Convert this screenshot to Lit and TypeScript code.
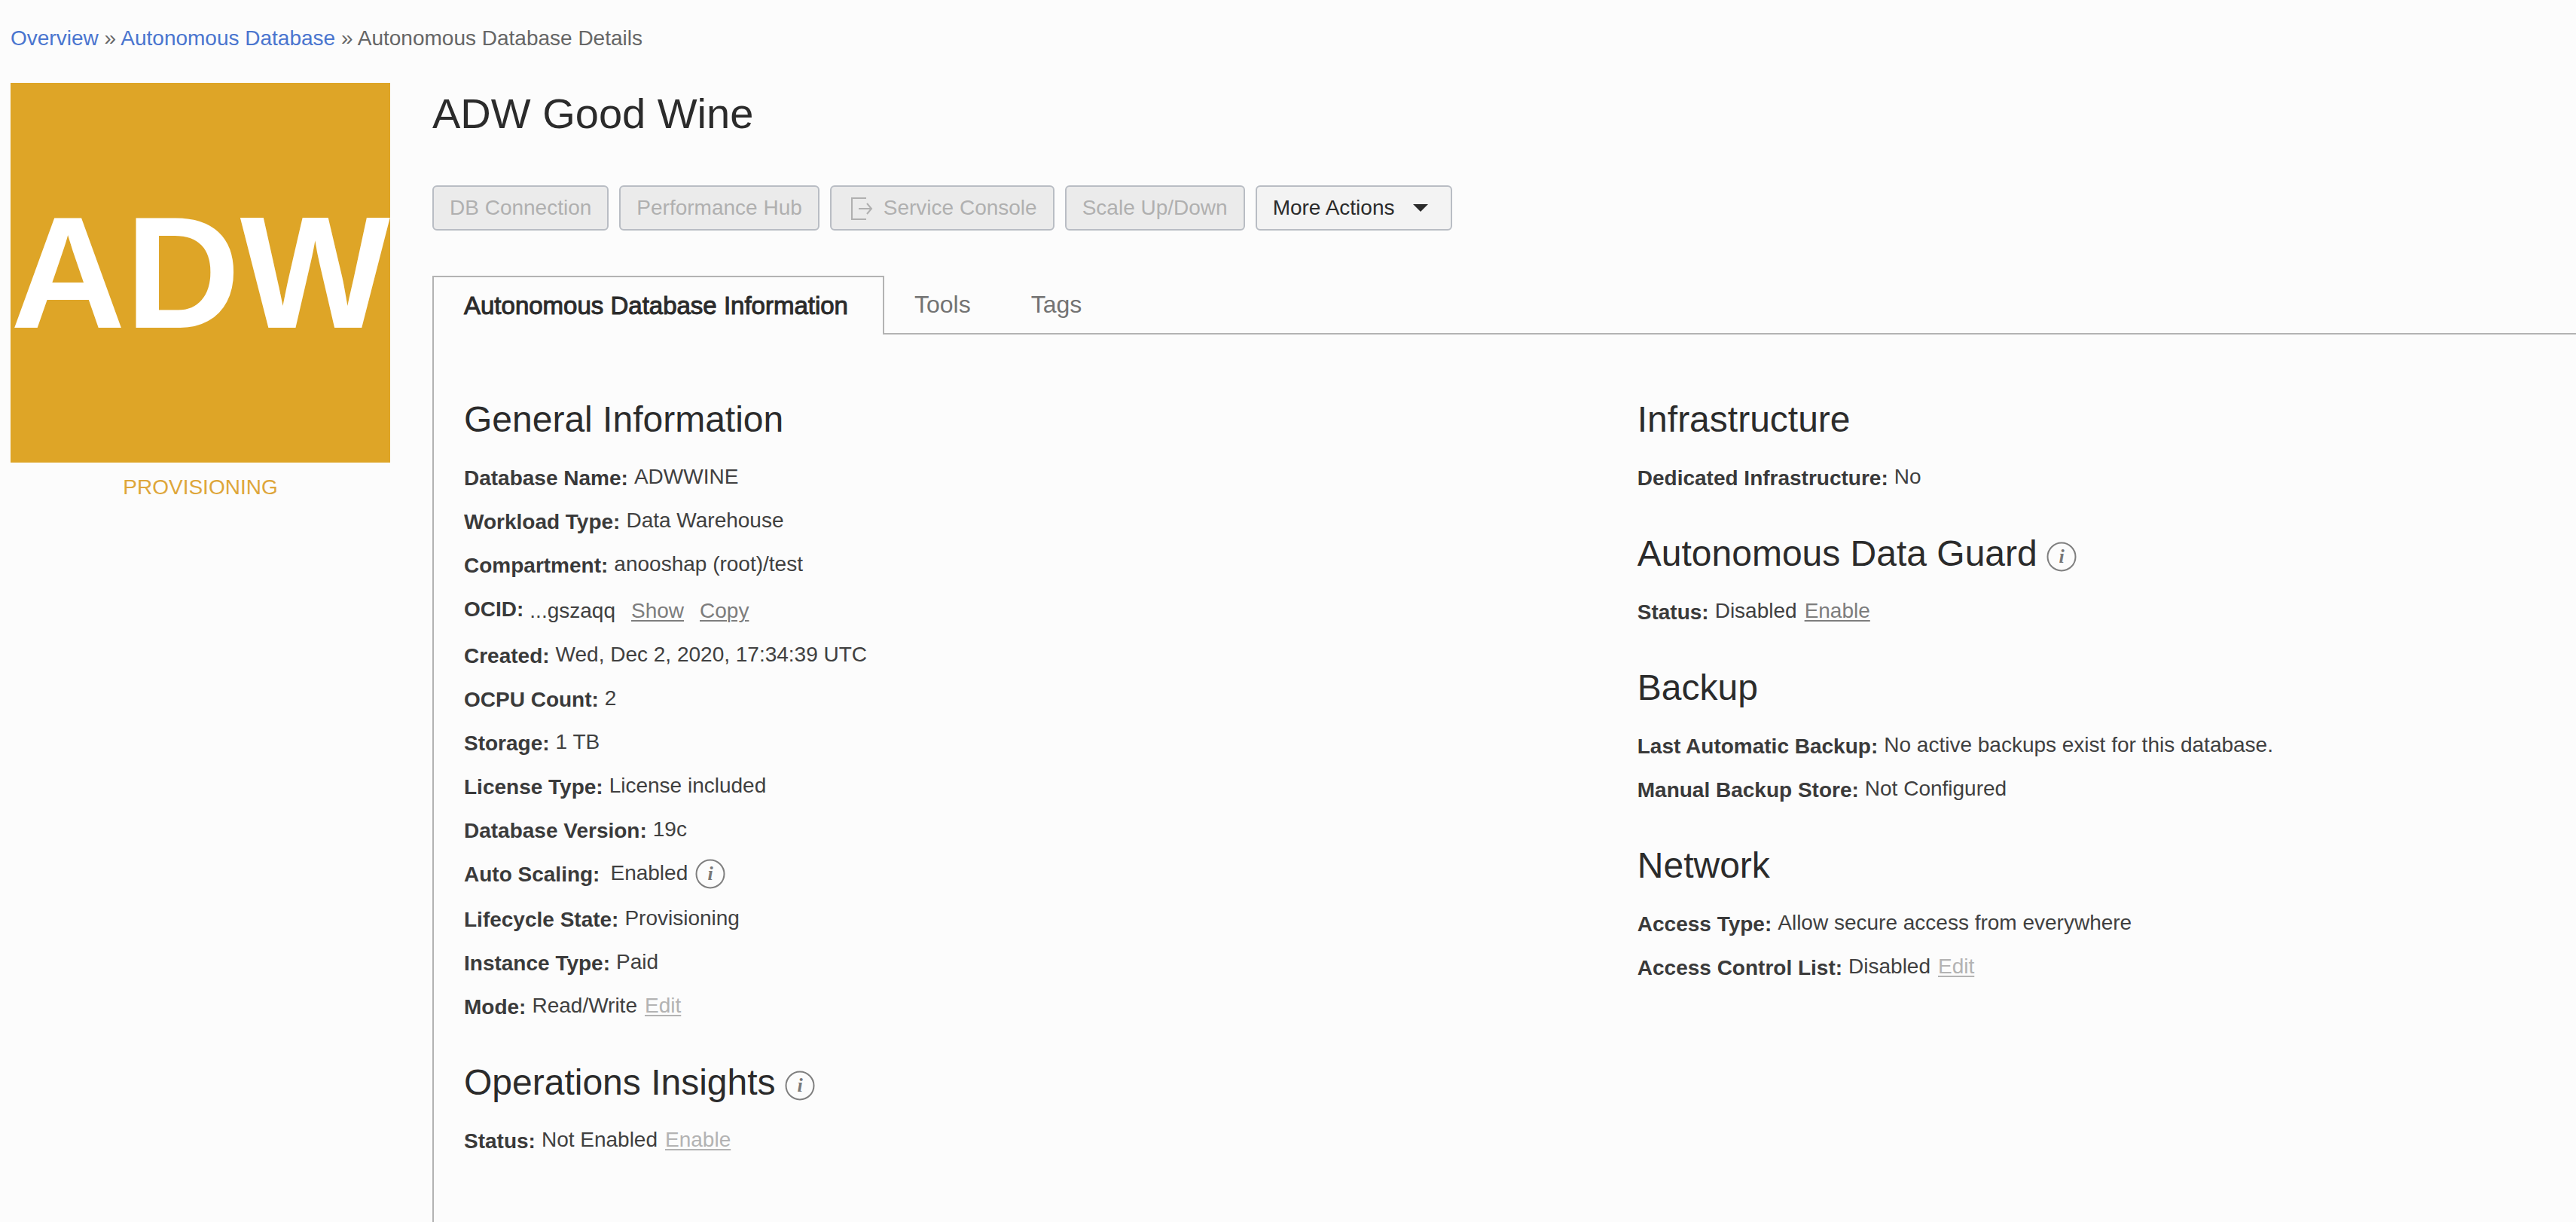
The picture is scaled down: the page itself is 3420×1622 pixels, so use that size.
import { LitElement, html, css, svg, nothing, type TemplateResult } from "lit";
import { customElement, property } from "lit/decorators.js";
import { classMap } from "lit/directives/class-map.js";

interface Action {
  text: string;
  disabled?: boolean;
}

interface Field {
  label: string;
  value: string;
  actions?: Action[];
  kind?: "identifier" | "hinted";
}

interface Section {
  title: string;
  hint?: boolean;
  fields: Field[];
}

const LEFT: Section[] = [
  {
    title: "General Information",
    fields: [
      { label: "Database Name:", value: "ADWWINE" },
      { label: "Workload Type:", value: "Data Warehouse" },
      { label: "Compartment:", value: "anooshap (root)/test" },
      {
        label: "OCID:",
        value: "...gszaqq",
        kind: "identifier",
        actions: [{ text: "Show" }, { text: "Copy" }],
      },
      { label: "Created:", value: "Wed, Dec 2, 2020, 17:34:39 UTC" },
      { label: "OCPU Count:", value: "2" },
      { label: "Storage:", value: "1 TB" },
      { label: "License Type:", value: "License included" },
      { label: "Database Version:", value: "19c" },
      { label: "Auto Scaling:", value: "Enabled", kind: "hinted" },
      { label: "Lifecycle State:", value: "Provisioning" },
      { label: "Instance Type:", value: "Paid" },
      { label: "Mode:", value: "Read/Write", actions: [{ text: "Edit", disabled: true }] },
    ],
  },
  {
    title: "Operations Insights",
    hint: true,
    fields: [
      { label: "Status:", value: "Not Enabled", actions: [{ text: "Enable", disabled: true }] },
    ],
  },
];

const RIGHT: Section[] = [
  {
    title: "Infrastructure",
    fields: [{ label: "Dedicated Infrastructure:", value: "No" }],
  },
  {
    title: "Autonomous Data Guard",
    hint: true,
    fields: [{ label: "Status:", value: "Disabled", actions: [{ text: "Enable" }] }],
  },
  {
    title: "Backup",
    fields: [
      { label: "Last Automatic Backup:", value: "No active backups exist for this database." },
      { label: "Manual Backup Store:", value: "Not Configured" },
    ],
  },
  {
    title: "Network",
    fields: [
      { label: "Access Type:", value: "Allow secure access from everywhere" },
      { label: "Access Control List:", value: "Disabled", actions: [{ text: "Edit", disabled: true }] },
    ],
  },
];

const infoGlyph = svg`
  <circle cx="20" cy="20" r="18.5" fill="none" stroke="#7f7f7f" stroke-width="2"></circle>
  <text x="20" y="28" text-anchor="middle" font-family="Liberation Serif, serif"
    font-style="italic" font-weight="700" font-size="26" fill="#777">i</text>`;

@customElement("info-section")
class InfoSection extends LitElement {
  @property({ attribute: false }) section!: Section;

  static styles = css`
    :host {
      display: block;
    }
    .title {
      margin: 0 0 20px;
      font-size: 48px;
      line-height: 58px;
      font-weight: 400;
      color: #2b2b2b;
    }
    .fields {
      margin: 0;
    }
    .row {
      display: flex;
      flex-wrap: wrap;
      align-items: flex-start;
      column-gap: 8px;
      font-size: 28px;
    }
    .label {
      line-height: 58px;
      font-weight: 700;
      color: #3a3a3a;
    }
    .value {
      display: flex;
      column-gap: 10px;
      margin: 0;
      line-height: 54px;
      color: #404040;
    }
    .identifier .value {
      column-gap: 21px;
      line-height: 62px;
    }
    .hinted {
      column-gap: 14px;
      min-height: 60px;
    }
    .link {
      border: 0;
      padding: 0;
      background: none;
      font: inherit;
      color: #7d7d7d;
      text-decoration: underline;
      text-decoration-thickness: 2px;
      text-underline-offset: 3px;
      cursor: pointer;
    }
    .link:disabled {
      color: #b3b3b3;
      cursor: default;
    }
    .info {
      display: inline-flex;
      align-items: center;
      border: 0;
      padding: 0;
      background: none;
      cursor: pointer;
    }
    .title .info {
      margin-left: 12px;
      vertical-align: -8px;
    }
    .hinted .info {
      height: 56px;
    }
    .glyph {
      display: block;
      width: 40px;
      height: 40px;
    }
  `;

  private info(): TemplateResult {
    return html`<button class="info" type="button" aria-label="More information"
      ><svg class="glyph" viewBox="0 0 40 40" aria-hidden="true">${infoGlyph}</svg></button>`;
  }

  render() {
    const { title, hint, fields } = this.section;
    return html`
      <h2 class="title">${title}${hint ? this.info() : nothing}</h2>
      <dl class="fields">
        ${fields.map(
          (f) => html`
            <div class=${classMap({
              row: true,
              identifier: f.kind === "identifier",
              hinted: f.kind === "hinted",
            })}>
              <dt class="label">${f.label}</dt>
              <dd class="value">
                <span>${f.value}</span>
                ${(f.actions ?? []).map(
                  (a) => html`<button class="link" type="button" ?disabled=${!!a.disabled}>${a.text}</button>`,
                )}
                ${f.kind === "hinted" ? this.info() : nothing}
              </dd>
            </div>
          `,
        )}
      </dl>
    `;
  }
}

@customElement("app-root")
class AppRoot extends LitElement {
  static styles = css`
    :host {
      display: flex;
      flex-direction: column;
      box-sizing: border-box;
      min-height: 100vh;
      background: #fcfcfc;
      font-family: "Liberation Sans", Arial, Helvetica, sans-serif;
      font-size: 28px;
      color: #2b2b2b;
    }
    .crumbs {
      padding: 35px 14px 43px;
      line-height: 32px;
      color: #666;
    }
    .crumb {
      color: #4a75cf;
      text-decoration: none;
    }
    .page {
      display: flex;
      flex: 1;
      gap: 56px;
      padding-left: 14px;
    }
    .side {
      flex: none;
      width: 504px;
    }
    .tile {
      display: flex;
      align-items: center;
      justify-content: center;
      aspect-ratio: 1;
      background: #dea527;
      color: #fff;
      font-size: 211px;
      font-weight: 700;
      line-height: 1;
    }
    .state {
      margin: 0;
      padding-top: 17px;
      line-height: 32px;
      text-align: center;
      color: #dea63a;
    }
    .main {
      display: flex;
      flex: 1;
      flex-direction: column;
      min-width: 0;
      padding-top: 9px;
    }
    .name {
      margin: 0 0 63px;
      font-size: 56px;
      line-height: 64px;
      font-weight: 400;
    }
    .actions {
      display: flex;
      flex-wrap: wrap;
      gap: 14px;
      margin-bottom: 60px;
    }
    .action {
      display: flex;
      align-items: center;
      height: 60px;
      padding: 0 21px;
      border: 2px solid #b9bdc4;
      border-radius: 6px;
      background: #f3f3f3;
      font: inherit;
      color: #2b2b2b;
      cursor: pointer;
    }
    .action:disabled {
      background: #ebebeb;
      color: #b0b0b0;
      cursor: default;
    }
    .exit {
      width: 40px;
      height: 32px;
      margin-right: 8px;
    }
    .caret {
      width: 20px;
      height: 10px;
      margin: 0 9px 0 24px;
    }
    .tabs {
      display: flex;
    }
    .tab {
      box-sizing: border-box;
      height: 78px;
      padding: 0 40px;
      border: 0;
      border-bottom: 2px solid #b3b3b3;
      background: none;
      font: inherit;
      font-size: 32px;
      color: #737373;
      cursor: pointer;
    }
    .current {
      min-width: 600px;
      border: 2px solid #b3b3b3;
      border-bottom: 0;
      font-size: 33px;
      text-align: left;
      color: #2b2b2b;
      -webkit-text-stroke: 1px #2b2b2b;
    }
    .rest {
      flex: 1;
      border-bottom: 2px solid #b3b3b3;
    }
    .panel {
      display: grid;
      flex: 1;
      grid-template-columns: 5fr 4fr;
      padding: 84px 0 60px 40px;
      border-left: 2px solid #b3b3b3;
    }
    .column {
      display: flex;
      flex-direction: column;
      gap: 42px;
    }
  `;

  private column(sections: Section[]): TemplateResult {
    return html`<div class="column">
      ${sections.map((s) => html`<info-section .section=${s}></info-section>`)}
    </div>`;
  }

  render() {
    return html`
      <nav class="crumbs" aria-label="Breadcrumb">
        <a class="crumb" href="#overview">Overview</a> »
        <a class="crumb" href="#autonomous-database">Autonomous Database</a> »
        <span>Autonomous Database Details</span>
      </nav>
      <div class="page">
        <aside class="side">
          <div class="tile">ADW</div>
          <p class="state">PROVISIONING</p>
        </aside>
        <main class="main">
          <h1 class="name">ADW Good Wine</h1>
          <div class="actions">
            <button class="action" type="button" disabled>DB Connection</button>
            <button class="action" type="button" disabled>Performance Hub</button>
            <button class="action" type="button" disabled>
              <svg class="exit" viewBox="0 0 40 32" fill="none" stroke="#b0b0b0" stroke-width="2" aria-hidden="true">
                <path d="M25 3H6V31H25"></path>
                <path d="M15 17H32M26 10L32 17L26 24"></path>
              </svg>
              Service Console
            </button>
            <button class="action" type="button" disabled>Scale Up/Down</button>
            <button class="action" type="button" aria-haspopup="menu">
              More Actions
              <svg class="caret" viewBox="0 0 20 10" aria-hidden="true">
                <path d="M0 0H20L10 10Z" fill="#2b2b2b"></path>
              </svg>
            </button>
          </div>
          <div class="tabs" role="tablist">
            <button class="tab current" type="button" role="tab" aria-selected="true">Autonomous Database Information</button>
            <button class="tab" type="button" role="tab" aria-selected="false">Tools</button>
            <button class="tab" type="button" role="tab" aria-selected="false">Tags</button>
            <div class="rest" role="presentation"></div>
          </div>
          <section class="panel" role="tabpanel">
            ${this.column(LEFT)} ${this.column(RIGHT)}
          </section>
        </main>
      </div>
    `;
  }
}
